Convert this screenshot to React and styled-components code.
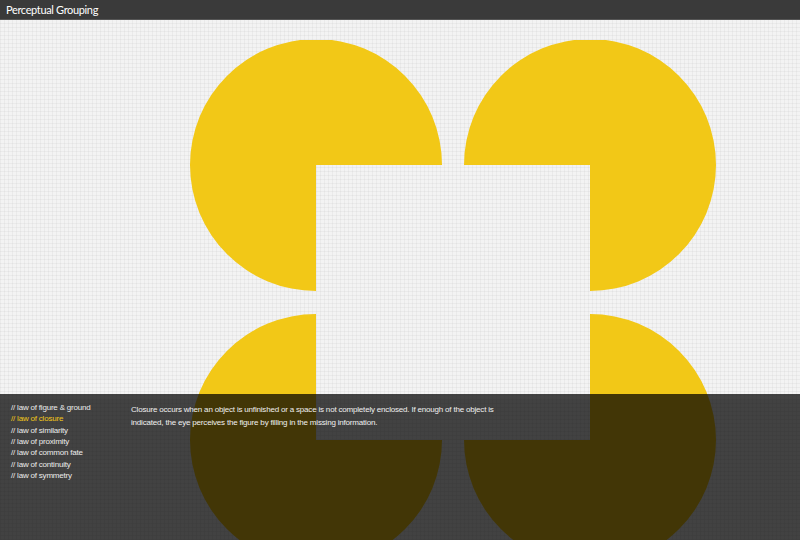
import React from 'react'
import styled, { createGlobalStyle } from 'styled-components'

const Global = createGlobalStyle`
  html, body {
    margin: 0;
    padding: 0;
    overflow: hidden;
  }
  body {
    font-family: "Liberation Sans", Arial, sans-serif;
  }
`;

const Page = styled.div`
  position: relative;
  width: 800px;
  height: 540px;
  overflow: hidden;
  background-color: #f3f3f3;
  background-image:
    repeating-linear-gradient(0deg, rgba(0,0,0,0.035) 0 1px, transparent 1px 4px),
    repeating-linear-gradient(90deg, rgba(0,0,0,0.035) 0 1px, transparent 1px 4px);
`;

const Header = styled.header`
  height: 20px;
  background: #3a3a3a;
  border-bottom: 1px solid #555;
  box-sizing: border-box;
  display: flex;
  align-items: center;
  padding: 0 6px;
  color: #fff;
  font-family: Lato, "Open Sans", sans-serif;
  font-size: 11px;
  letter-spacing: -0.35px;
`;

const Stage = styled.div`
  display: flex;
  padding: 20px 0 0 190px;
`;

const Figure = styled.svg`
  flex: none;
  display: block;
`;

const Panel = styled.section`
  position: absolute;
  left: 0;
  right: 0;
  bottom: 0;
  height: 146px;
  background: rgba(0, 0, 0, 0.73);
  display: flex;
  padding: 8px 0 0 11px;
  box-sizing: border-box;
`;

const Menu = styled.ul`
  list-style: none;
  margin: 0;
  padding: 0;
  width: 120px;
  flex: none;
`;

const Item = styled.li`
  font-size: 8px;
  line-height: 11.33px;
  letter-spacing: -0.2px;
  color: ${p => (p.$active ? '#f2c817' : '#ececec')};
`;

const Text = styled.p`
  margin: 0;
  padding-top: 2px;
  width: 372px;
  font-size: 8px;
  line-height: 12.5px;
  letter-spacing: -0.19px;
  color: #f0f0f0;
`;

const YELLOW = '#f2c817';
const R = 126;

// three-quarter discs, the missing quarter faces the square
const pieces = [
  (x, y) => `M${x} ${y}L${x} ${y + R}A${R} ${R} 0 1 1 ${x + R} ${y}Z`,
  (x, y) => `M${x} ${y}L${x - R} ${y}A${R} ${R} 0 1 1 ${x} ${y + R}Z`,
  (x, y) => `M${x} ${y}L${x + R} ${y}A${R} ${R} 0 1 1 ${x} ${y - R}Z`,
  (x, y) => `M${x} ${y}L${x} ${y - R}A${R} ${R} 0 1 1 ${x - R} ${y}Z`,
];
const centers = [
  [126, 125],
  [400, 125],
  [126, 400],
  [400, 400],
];

const laws = [
  'law of figure & ground',
  'law of closure',
  'law of similarity',
  'law of proximity',
  'law of common fate',
  'law of continuity',
  'law of symmetry',
];

export default function App() {
  return (
    <Page>
      <Global />
      <Header>Perceptual Grouping</Header>
      <Stage>
        <Figure width="526" height="540" viewBox="0 0 526 540">
          {centers.map(([x, y], i) => (
            <path key={i} d={pieces[i](x, y)} fill={YELLOW} />
          ))}
        </Figure>
      </Stage>
      <Panel>
        <Menu>
          {laws.map(l => (
            <Item key={l} $active={l === 'law of closure'}>// {l}</Item>
          ))}
        </Menu>
        <Text>
          Closure occurs when an object is unfinished or a space is not completely enclosed. If enough of the object is
          indicated, the eye perceives the figure by filling in the missing information.
        </Text>
      </Panel>
    </Page>
  )
}
